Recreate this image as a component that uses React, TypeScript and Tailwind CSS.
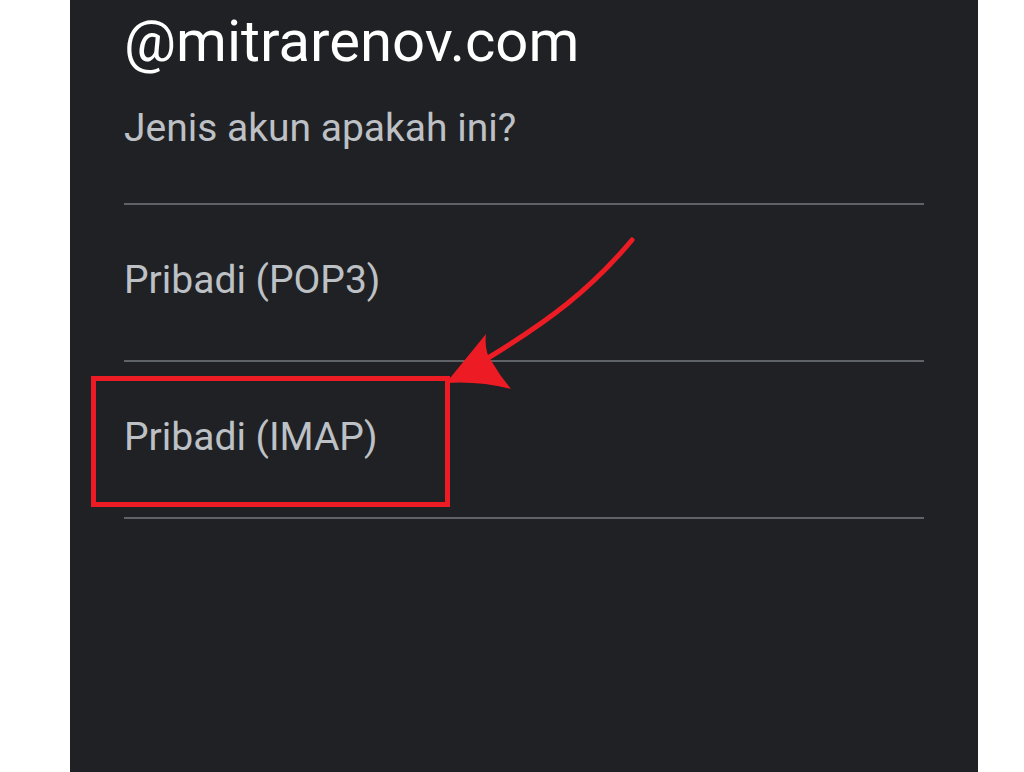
import React from "react";

const font = { fontFamily: "Roboto, 'Noto Sans', sans-serif" };

type RowProps = { label: string };

function OptionRow({ label }: RowProps) {
  return (
    <div className="h-[157px] border-b-2 border-[#5f6368] pt-[54px]">
      <span className="block text-[39px] leading-[42px] text-[#bdc1c6]">{label}</span>
    </div>
  );
}

export default function App() {
  return (
    <div className="min-h-[772px] w-full bg-white" style={font}>
      <div className="relative ml-[70px] h-[772px] w-[908px] overflow-hidden bg-[#202124] px-[54px]">
        <h1 className="pt-[10px] text-[58px] leading-[62px] text-white">@mitrarenov.com</h1>
        <p className="mt-[35px] text-[39px] leading-[42px] text-[#bdc1c6]">Jenis akun apakah ini?</p>
        <div className="mt-[54px] border-b-2 border-[#5f6368]" />
        <OptionRow label="Pribadi (POP3)" />
        <OptionRow label="Pribadi (IMAP)" />

        {/* highlight box */}
        <div className="absolute left-[21px] top-[376px] h-[131px] w-[359px] border-[5px] border-[#ed1c24]" />

        {/* arrow */}
        <svg
          className="absolute left-0 top-0"
          width="908"
          height="772"
          viewBox="0 0 908 772"
        >
          <path
            d="M562 240 C 520 290, 480 320, 418 358"
            fill="none"
            stroke="#ed1c24"
            strokeWidth="5"
            strokeLinecap="round"
          />
          <path
            d="M376 383 L416 334 Q 414 352, 422 362 Q 430 376, 441 389 Q 410 381, 376 383 Z"
            fill="#ed1c24"
          />
        </svg>
      </div>
    </div>
  );
}
